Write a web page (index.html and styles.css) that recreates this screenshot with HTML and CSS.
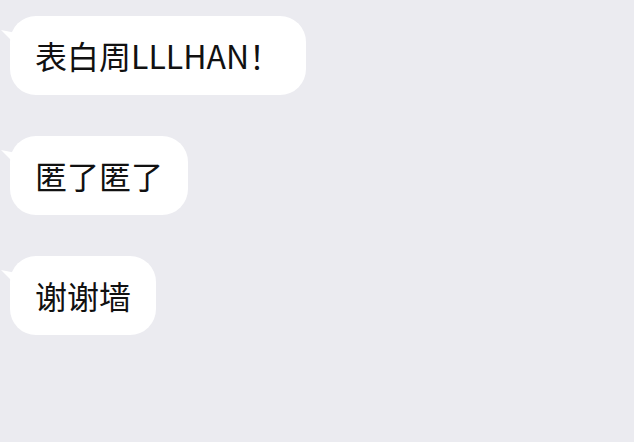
FILE: index.html
```html
<!DOCTYPE html>
<html lang="zh-CN">
<head>
<meta charset="utf-8">
<link rel="stylesheet" href="styles.css">
</head>
<body>
<div class="chat">
  <div class="bubble">表白周LLLHAN！</div>
  <div class="bubble">匿了匿了</div>
  <div class="bubble">谢谢墙</div>
</div>
</body>
</html>
```
FILE: styles.css
```css
html, body {
  margin: 0;
  padding: 0;
  background: #ebebf0;
  width: 634px;
  height: 442px;
  overflow: hidden;
}
.chat {
  display: flex;
  flex-direction: column;
  align-items: flex-start;
  gap: 41px;
  padding: 16px 0 0 10px;
}
.bubble {
  position: relative;
  background: #fff;
  border-radius: 26px;
  padding: 16px 25px;
  font-family: "Noto Sans CJK SC", "Noto Sans", sans-serif;
  font-size: 32px;
  line-height: 47px;
  color: #111;
}
.bubble::before {
  content: "";
  position: absolute;
  left: -9px;
  top: 14px;
  width: 14px;
  height: 14px;
  background: #fff;
  clip-path: polygon(0 0, 100% 20%, 100% 100%);
}
```
